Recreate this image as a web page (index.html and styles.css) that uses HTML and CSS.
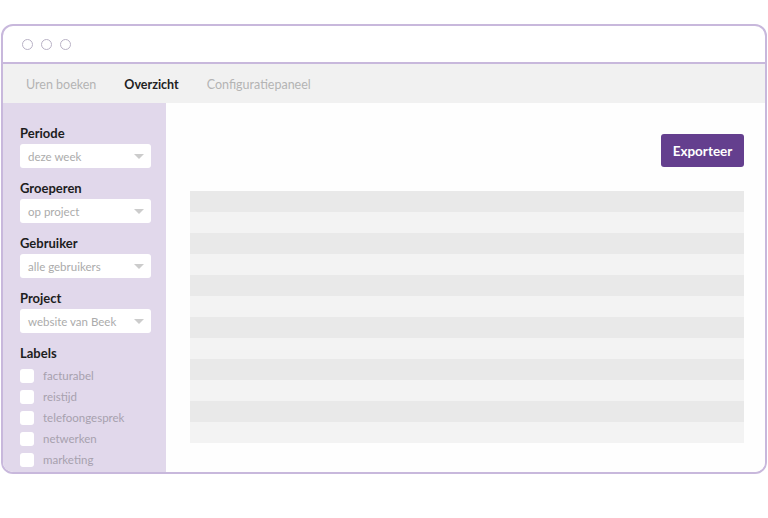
FILE: index.html
```html
<!DOCTYPE html>
<html lang="nl">
<head>
<meta charset="utf-8">
<title>Overzicht</title>
<link rel="stylesheet" href="styles.css">
</head>
<body>
<div class="window">
  <div class="titlebar">
    <span class="dot"></span><span class="dot"></span><span class="dot"></span>
  </div>
  <nav class="tabs">
    <span class="tab">Uren boeken</span>
    <span class="tab active">Overzicht</span>
    <span class="tab">Configuratiepaneel</span>
  </nav>
  <div class="content">
    <aside class="sidebar">
      <div class="field">
        <div class="label">Periode</div>
        <div class="select"><span>deze week</span><i class="caret"></i></div>
      </div>
      <div class="field">
        <div class="label">Groeperen</div>
        <div class="select"><span>op project</span><i class="caret"></i></div>
      </div>
      <div class="field">
        <div class="label">Gebruiker</div>
        <div class="select"><span>alle gebruikers</span><i class="caret"></i></div>
      </div>
      <div class="field">
        <div class="label">Project</div>
        <div class="select"><span>website van Beek</span><i class="caret"></i></div>
      </div>
      <div class="field labels">
        <div class="label">Labels</div>
        <div class="check"><span class="box"></span><span>facturabel</span></div>
        <div class="check"><span class="box"></span><span>reistijd</span></div>
        <div class="check"><span class="box"></span><span>telefoongesprek</span></div>
        <div class="check"><span class="box"></span><span>netwerken</span></div>
        <div class="check"><span class="box"></span><span>marketing</span></div>
      </div>
    </aside>
    <main class="main">
      <div class="actions"><button class="export">Exporteer</button></div>
      <div class="table">
        <div class="row"></div><div class="row"></div><div class="row"></div>
        <div class="row"></div><div class="row"></div><div class="row"></div>
        <div class="row"></div><div class="row"></div><div class="row"></div>
        <div class="row"></div><div class="row"></div><div class="row"></div>
      </div>
    </main>
  </div>
</div>
</body>
</html>
```
FILE: styles.css
```css
* { box-sizing: border-box; }
html, body { margin: 0; padding: 0; background: #ffffff; }
body {
  padding: 24px 0 0 1px;
  font-family: Lato, "Open Sans", "Liberation Sans", sans-serif;
}
.window {
  width: 766px;
  height: 450px;
  border: 2px solid #c8b8dc;
  border-radius: 12px;
  overflow: hidden;
  display: flex;
  flex-direction: column;
  background: #fff;
}
.titlebar {
  height: 38px;
  border-bottom: 2px solid #c8b8dc;
  display: flex;
  align-items: center;
  gap: 8px;
  padding-left: 19px;
  flex: none;
}
.dot {
  width: 11px;
  height: 11px;
  border-radius: 50%;
  border: 1px solid #b9b2c6;
}
.tabs {
  height: 39px;
  background: #f1f1f1;
  display: flex;
  align-items: center;
  padding: 2px 0 0 23px;
  gap: 28px;
  flex: none;
  font-size: 12.5px;
  color: #b4b4b4;
}
.tab.active { color: #222; font-weight: 700; }
.content {
  flex: 1;
  display: flex;
  min-height: 0;
}
.sidebar {
  width: 163px;
  flex: none;
  background: #e1d8eb;
  padding: 22px 0 0 17px;
}
.field { margin-bottom: 12px; }
.label {
  font-size: 13px;
  font-weight: 700;
  color: #1d1d1d;
  line-height: 17px;
  margin-bottom: 2px;
}
.select {
  width: 131px;
  height: 24px;
  background: #fff;
  border-radius: 3px;
  display: flex;
  align-items: center;
  justify-content: space-between;
  padding: 0 7px 0 8px;
  font-size: 11.5px;
  color: #ababab;
}
.caret {
  width: 0;
  height: 0;
  border-left: 5px solid transparent;
  border-right: 5px solid transparent;
  border-top: 5px solid #cccccc;
}
.labels .label { margin-bottom: 3px; }
.check {
  height: 21px;
  display: flex;
  align-items: center;
  gap: 9px;
  font-size: 11.5px;
  color: #a7a1ae;
}
.box {
  width: 14px;
  height: 14px;
  background: #fff;
  border-radius: 3px;
}
.main {
  flex: 1;
  background: #fefefe;
  padding: 31px 21px 0 24px;
}
.actions {
  display: flex;
  justify-content: flex-end;
  margin-bottom: 24px;
}
.export {
  width: 83px;
  height: 33px;
  border: none;
  border-radius: 3px;
  background: #643f8e;
  color: #fff;
  font-family: inherit;
  font-size: 13.5px;
  font-weight: 700;
  padding: 0;
}
.row { height: 21px; }
.row:nth-child(odd) { background: #e9e9e9; }
.row:nth-child(even) { background: #f3f3f3; }
```
